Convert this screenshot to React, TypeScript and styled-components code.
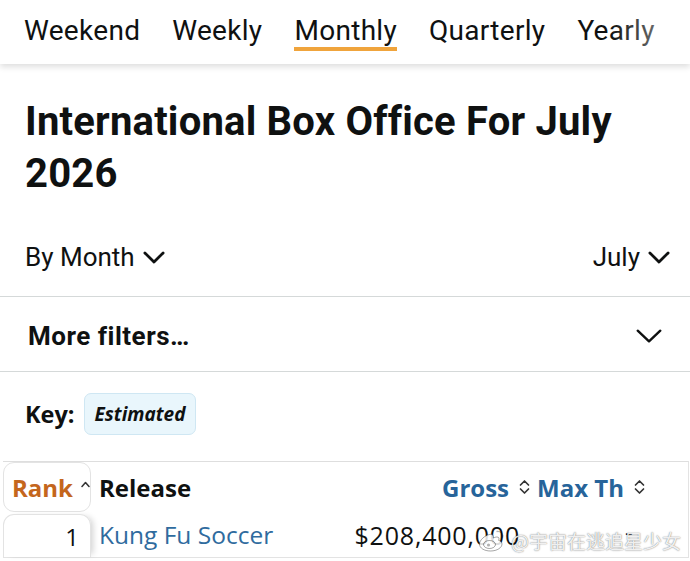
import React from "react";
import styled, { createGlobalStyle } from "styled-components";

const GlobalStyle = createGlobalStyle`
  html, body {
    margin: 0;
    padding: 0;
    background: #ffffff;
  }
  body {
    font-family: Roboto, "Noto Sans", Arial, sans-serif;
    color: #0f1111;
    -webkit-font-smoothing: antialiased;
  }
  * { box-sizing: border-box; }
`;

const Page = styled.div`
  position: relative;
  width: 690px;
  height: 561px;
  overflow: hidden;
  background: #ffffff;
`;

/* ---------- period tabs ---------- */

const TabBar = styled.nav`
  position: relative;
  height: 64px;
  display: flex;
  padding-left: 24px;
  gap: 32px;
  background: #ffffff;
  box-shadow: 0 3px 6px rgba(0, 0, 0, 0.13);
  white-space: nowrap;
  overflow: hidden;
  z-index: 2;

  &::after {
    content: "";
    position: absolute;
    top: 0;
    right: 0;
    width: 80px;
    height: 100%;
    background: linear-gradient(to right, rgba(255, 255, 255, 0), rgba(255, 255, 255, 0.65));
  }
`;

const Tab = styled.span<{ $active?: boolean }>`
  padding-top: 14px;
  height: 51px;
  font-size: 28px;
  line-height: 33px;
  font-weight: 400;
  letter-spacing: 0.3px;
  color: #0f1111;
  border-bottom: 4px solid ${(p) => (p.$active ? "#f0a43c" : "transparent")};
`;

/* ---------- heading & filters ---------- */

const Title = styled.h1`
  margin: 32px 25px 0;
  font-size: 40px;
  line-height: 52px;
  font-weight: 700;
  letter-spacing: 0.2px;
  color: #0f1111;
`;

const FilterBar = styled.div`
  display: flex;
  justify-content: space-between;
  align-items: center;
  padding: 42px 20px 24px 25px;
  border-bottom: 1.5px solid #d5d9d9;
`;

const Dropdown = styled.span`
  display: inline-flex;
  align-items: center;
  gap: 8px;
  font-size: 26px;
  line-height: 30px;
  color: #0f1111;
`;

const MoreFilters = styled.div`
  display: flex;
  justify-content: space-between;
  align-items: center;
  padding: 24px 28px 20px 28px;
  border-bottom: 1.5px solid #d5d9d9;
`;

const MoreLabel = styled.span`
  font-size: 26px;
  line-height: 30px;
  font-weight: 700;
  letter-spacing: 0.5px;
`;

/* ---------- key ---------- */

const KeyRow = styled.div`
  display: flex;
  align-items: center;
  gap: 9px;
  margin: 21px 0 26px 25px;
  font-family: "Open Sans", "Noto Sans", sans-serif;
`;

const KeyLabel = styled.span`
  font-size: 23.5px;
  font-weight: 700;
  color: #0f1111;
`;

const Badge = styled.span`
  display: inline-flex;
  align-items: center;
  height: 42px;
  padding: 0 10px;
  border-radius: 7px;
  background: #e9f6fc;
  border: 1px solid #cfe7f3;
  font-size: 19px;
  font-style: italic;
  font-weight: 700;
  color: #0f1111;
`;

/* ---------- table ---------- */

const Table = styled.div`
  margin-left: 3px;
  width: 686px;
  border-top: 1.5px solid #dedede;
  border-right: 1.5px solid #e3e3e3;
  font-family: "Open Sans", "Noto Sans", sans-serif;
`;

const Row = styled.div<{ $head?: boolean }>`
  display: grid;
  grid-template-columns: 88px 262px 184px 1fr;
  height: ${(p) => (p.$head ? "50px" : "46px")};
  border-bottom: ${(p) => (p.$head ? "none" : "1.5px solid #e3e3e3")};
`;

const RankHead = styled.div`
  display: flex;
  align-items: center;
  gap: 8px;
  padding-left: 8px;
  border: 1.5px solid #e3e3e3;
  border-radius: 11px;
  font-size: 24px;
  font-weight: 700;
  color: #c4661d;
`;

const RankCell = styled.div`
  position: relative;
  display: flex;
  align-items: center;
  justify-content: flex-end;
  padding-right: 11px;
  margin-top: 2px;
  border: 1.5px solid #e3e3e3;
  border-bottom: none;
  border-radius: 11px 11px 0 0;
  box-shadow: 5px 0 6px -3px rgba(0, 0, 0, 0.18);
  font-size: 24px;
  color: #0f1111;
`;

const HeadCell = styled.div<{ $align?: "start" | "end"; $blue?: boolean }>`
  display: flex;
  align-items: center;
  justify-content: ${(p) => (p.$align === "end" ? "flex-end" : "flex-start")};
  gap: 9px;
  padding: 0 6px 0 8px;
  font-size: 24px;
  font-weight: 700;
  color: ${(p) => (p.$blue ? "#27649a" : "#0f1111")};
  white-space: nowrap;
`;

const HeadCellTight = styled(HeadCell)`
  padding-left: 0;
`;

const Cell = styled.div<{ $align?: "start" | "end"; $pad?: string }>`
  display: flex;
  align-items: center;
  justify-content: ${(p) => (p.$align === "end" ? "flex-end" : "flex-start")};
  padding: ${(p) => p.$pad ?? "0 8px"};
  font-size: 24px;
  color: #0f1111;
  white-space: nowrap;
`;

const Money = styled.span`
  font-size: 25px;
  letter-spacing: 0.8px;
`;

const Link = styled.a`
  color: #2f6b9e;
  text-decoration: none;
  font-size: 24.5px;
`;

/* ---------- weibo watermark ---------- */

const Watermark = styled.div`
  position: absolute;
  right: 9px;
  bottom: 7px;
  display: flex;
  align-items: center;
  gap: 4px;
  font-family: "Noto Sans CJK SC", "Noto Sans", sans-serif;
  font-size: 19px;
  color: rgba(255, 255, 255, 0.9);
  text-shadow: 0 0 1px rgba(0, 0, 0, 0.45), 0 0 2px rgba(0, 0, 0, 0.25);
  z-index: 3;
`;

const Chevron = ({ w = 22, h = 13, sw = 2.8 }: { w?: number; h?: number; sw?: number }) => (
  <svg width={w} height={h} viewBox={`0 0 ${w} ${h}`} fill="none">
    <path
      d={`M${sw / 2 + 0.5} ${sw / 2 + 0.5} L${w / 2} ${h - sw / 2 - 0.5} L${w - sw / 2 - 0.5} ${sw / 2 + 0.5}`}
      stroke="#0f1111"
      strokeWidth={sw}
      strokeLinecap="round"
      strokeLinejoin="round"
    />
  </svg>
);

const SortBoth = () => (
  <svg width="13" height="18" viewBox="0 0 13 18" fill="none">
    <path d="M2.5 7 L6.5 3 L10.5 7" stroke="#333" strokeWidth="1.7" strokeLinecap="round" strokeLinejoin="round" />
    <path d="M2.5 11 L6.5 15 L10.5 11" stroke="#333" strokeWidth="1.7" strokeLinecap="round" strokeLinejoin="round" />
  </svg>
);

const SortUp = () => (
  <svg width="9" height="7" viewBox="0 0 9 7" fill="none" style={{ marginTop: -6 }}>
    <path d="M1 5.5 L4.5 1.5 L8 5.5" stroke="#333" strokeWidth="1.5" strokeLinecap="round" strokeLinejoin="round" />
  </svg>
);

const WeiboLogo = () => (
  <svg width="30" height="26" viewBox="0 0 30 26" fill="none">
    <path
      d="M12.5 6.5c-5 1.2-10 5.6-10 9.6 0 4 4.8 6.9 11 6.9 7 0 11.5-3.6 11.5-7 0-2.4-2.3-3.3-3.4-3.6 1-2.1.3-3.6-1.9-3.4-1.4.1-3 .9-3.5 1.1.4-1.8-.3-4.4-3.7-3.6z"
      fill="rgba(255,255,255,0.85)"
      stroke="rgba(0,0,0,0.35)"
      strokeWidth="1"
    />
    <ellipse cx="12.5" cy="16.5" rx="6" ry="4" stroke="rgba(0,0,0,0.35)" strokeWidth="1" fill="none" />
    <circle cx="11.5" cy="17" r="1.6" fill="rgba(0,0,0,0.3)" />
    <path d="M20 3.5c3.5-.5 6.2 2.2 5.6 5.6" stroke="rgba(0,0,0,0.3)" strokeWidth="1.3" strokeLinecap="round" />
  </svg>
);

export default function App() {
  return (
    <Page>
      <GlobalStyle />
      <TabBar>
        <Tab>Weekend</Tab>
        <Tab>Weekly</Tab>
        <Tab $active>Monthly</Tab>
        <Tab>Quarterly</Tab>
        <Tab>Yearly</Tab>
      </TabBar>

      <Title>International Box Office For July 2026</Title>

      <FilterBar>
        <Dropdown>
          By Month <Chevron />
        </Dropdown>
        <Dropdown>
          July <Chevron />
        </Dropdown>
      </FilterBar>

      <MoreFilters>
        <MoreLabel>More filters…</MoreLabel>
        <Chevron w={26} h={14} sw={2.4} />
      </MoreFilters>

      <KeyRow>
        <KeyLabel>Key:</KeyLabel>
        <Badge>Estimated</Badge>
      </KeyRow>

      <Table>
        <Row $head>
          <RankHead>
            Rank <SortUp />
          </RankHead>
          <HeadCell>Release</HeadCell>
          <HeadCell $align="end" $blue>
            Gross <SortBoth />
          </HeadCell>
          <HeadCellTight $blue>
            Max Th <SortBoth />
          </HeadCellTight>
        </Row>
        <Row>
          <RankCell>1</RankCell>
          <Cell>
            <Link href="#">Kung Fu Soccer</Link>
          </Cell>
          <Cell $align="end" $pad="0 17px 0 0">
            <Money>$208,400,000</Money>
          </Cell>
          <Cell $align="start" $pad="0 0 6px 88px">
            -
          </Cell>
        </Row>
      </Table>

      <Watermark>
        <WeiboLogo />
        <span>@宇宙在逃追星少女</span>
      </Watermark>
    </Page>
  );
}
